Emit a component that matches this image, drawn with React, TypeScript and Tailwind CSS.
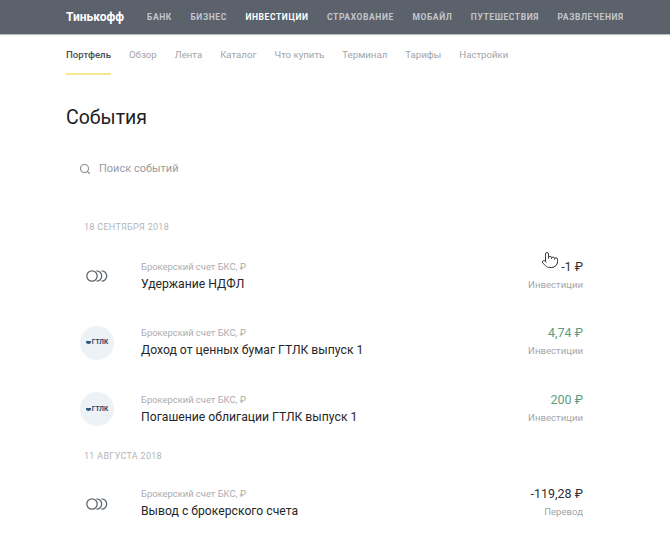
import { Pointer, Search } from "lucide-react"

const topLinks = ["БАНК", "БИЗНЕС", "ИНВЕСТИЦИИ", "СТРАХОВАНИЕ", "МОБАЙЛ", "ПУТЕШЕСТВИЯ", "РАЗВЛЕЧЕНИЯ"]
const subLinks = ["Портфель", "Обзор", "Лента", "Каталог", "Что купить", "Терминал", "Тарифы", "Настройки"]

function RingsIcon() {
  return (
    <div className="flex w-[34px] justify-center">
      <svg width="22" height="12" viewBox="0 0 22 12" fill="none" stroke="#5f6670" strokeWidth="1.3">
        <circle cx="6" cy="6" r="5.2" />
        <path d="M10.5 0.8a5.2 5.2 0 0 1 0 10.4" />
        <path d="M15.5 0.8a5.2 5.2 0 0 1 0 10.4" />
      </svg>
    </div>
  )
}

function GtlkIcon() {
  return (
    <div className="flex h-[34px] w-[34px] items-center justify-center gap-px rounded-full bg-[#edf2f6]">
      <span className="h-[3px] w-[5px] rounded-b-full bg-[#2b5a85]" />
      <span className="text-[6.5px] leading-none font-bold text-[#1f3f66]">ГТЛК</span>
    </div>
  )
}

interface RowProps {
  icon: React.ReactNode
  title: string
  amount: string
  category: string
  positive?: boolean
  className?: string
}

function Row({ icon, title, amount, category, positive, className }: RowProps) {
  return (
    <div className={"flex h-[38px] items-center " + (className ?? "")}>
      <div className="w-[61px] shrink-0">{icon}</div>
      <div className="flex-1">
        <div className="text-[9.4px] leading-[14px] text-[#a9acb0]">Брокерский счет БКС, ₽</div>
        <div className="mt-[2px] text-[12.2px] leading-[17px] text-[#25282b]">{title}</div>
      </div>
      <div className="pb-px text-right">
        <div className={"text-[12.5px] leading-[14px] " + (positive ? "text-[#5d9c82]" : "text-[#2c2f33]")}>{amount}</div>
        <div className="mt-[4px] text-[9.6px] leading-[14px] text-[#a3a6aa]">{category}</div>
      </div>
    </div>
  )
}

export default function App() {
  return (
    <div className="relative h-[539px] w-[670px] overflow-hidden bg-white font-['Roboto',sans-serif]">
      <header className="flex h-[34px] items-center bg-[#5b626c] pl-[66px] shadow-[0_1px_1px_rgba(0,0,0,0.25)]">
        <span className="mr-[23px] text-[12px] font-bold text-white">Тинькофф</span>
        <nav className="flex gap-[18.5px]">
          {topLinks.map((link) => (
            <span
              key={link}
              className={
                "text-[8.5px] font-bold tracking-[0.6px] " + (link === "ИНВЕСТИЦИИ" ? "text-white" : "text-[#c3c6cb]")
              }
            >
              {link}
            </span>
          ))}
        </nav>
      </header>

      <nav className="ml-[66px] flex h-[41px] gap-[18px]">
        {subLinks.map((link, i) => (
          <div
            key={link}
            className={
              "pt-[14px] text-[9.66px] leading-[14px] " +
              (i === 0 ? "border-b-2 border-[#f5e98f] font-medium text-[#4a4d52]" : "text-[#a2a5a9]")
            }
          >
            {link}
          </div>
        ))}
      </nav>

      <h1 className="mt-[29px] ml-[66px] text-[19.5px] leading-[28px] text-[#1c1e21]">События</h1>

      <div className="mt-[27px] ml-[79px] flex h-[20px] items-center gap-[8px] text-[11px] text-[#9a9da2]">
        <Search size={12} strokeWidth={2.2} className="text-[#85888d]" />
        <span>Поиск событий</span>
      </div>

      <main className="mr-[87px] ml-[80px]">
        <div className="mt-[41px] ml-[4px] text-[9px] leading-[14px] tracking-[0.3px] text-[#b3b5b8]">18 СЕНТЯБРЯ 2018</div>
        <Row className="mt-[23px]" icon={<RingsIcon />} title="Удержание НДФЛ" amount="-1 ₽" category="Инвестиции" />
        <Row className="mt-[28.5px]" icon={<GtlkIcon />} title="Доход от ценных бумаг ГТЛК выпуск 1" amount="4,74 ₽" category="Инвестиции" positive />
        <Row className="mt-[28.5px]" icon={<GtlkIcon />} title="Погашение облигации ГТЛК выпуск 1" amount="200 ₽" category="Инвестиции" positive />
        <div className="mt-[20.5px] ml-[4px] text-[9px] leading-[14px] tracking-[0.3px] text-[#b3b5b8]">11 АВГУСТА 2018</div>
        <Row className="mt-[22px]" icon={<RingsIcon />} title="Вывод с брокерского счета" amount="-119,28 ₽" category="Перевод" />
      </main>

      <Pointer size={18} strokeWidth={1.3} className="absolute top-[251px] left-[541px] fill-white text-[#3a3d42]" />
    </div>
  )
}
